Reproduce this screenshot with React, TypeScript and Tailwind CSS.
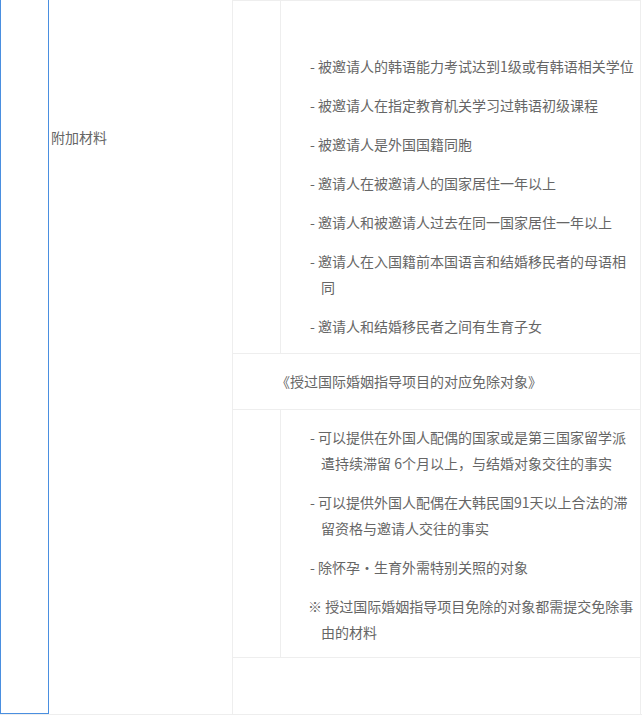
export default function App() {
  const f = { fontFamily: '"Noto Sans CJK SC", "Noto Sans", sans-serif' };
  const Item = ({ t }: { t: string }) => (
    <p className="pl-[40px] pr-[2px] -indent-[11px] leading-[26px] mb-[13px]">{t}</p>
  );
  return (
    <div className="w-[642px] h-[717px] bg-white text-[14px] text-[#666]" style={f}>
      <div className="flex h-[715px] border-b border-[#eee]">
        <div className="w-[49px] shrink-0 border-x border-b border-[#4a8fe0]"></div>
        <div className="w-[183px] shrink-0 pl-[2px] pt-[126px] leading-[22px]">附加材料</div>
        <div className="w-[409px] border-x border-t border-[#eee] flex flex-col">
          <div className="flex h-[353px] border-b border-[#eee]">
            <div className="w-[48px] border-r border-[#eee]"></div>
            <div className="flex-1 pt-[52px]">
              <Item t="- 被邀请人的韩语能力考试达到1级或有韩语相关学位" />
              <Item t="- 被邀请人在指定教育机关学习过韩语初级课程" />
              <Item t="- 被邀请人是外国国籍同胞" />
              <Item t="- 邀请人在被邀请人的国家居住一年以上" />
              <Item t="- 邀请人和被邀请人过去在同一国家居住一年以上" />
              <Item t="- 邀请人在入国籍前本国语言和结婚移民者的母语相同" />
              <Item t="- 邀请人和结婚移民者之间有生育子女" />
            </div>
          </div>
          <div className="h-[56px] border-b border-[#eee] flex items-center pl-[43px]">《授过国际婚姻指导项目的对应免除对象》</div>
          <div className="flex h-[248px] border-b border-[#eee]">
            <div className="w-[48px] border-r border-[#eee]"></div>
            <div className="flex-1 pt-[14px]">
              <Item t="- 可以提供在外国人配偶的国家或是第三国家留学派遣持续滞留 6个月以上，与结婚对象交往的事实" />
              <Item t="- 可以提供外国人配偶在大韩民国91天以上合法的滞留资格与邀请人交往的事实" />
              <Item t="- 除怀孕·生育外需特别关照的对象" />
              <p className="pl-[40px] pr-[2px] -indent-[13px] leading-[26px]">※ 授过国际婚姻指导项目免除的对象都需提交免除事由的材料</p>
            </div>
          </div>
          <div className="flex-1"></div>
        </div>
      </div>
    </div>
  );
}
